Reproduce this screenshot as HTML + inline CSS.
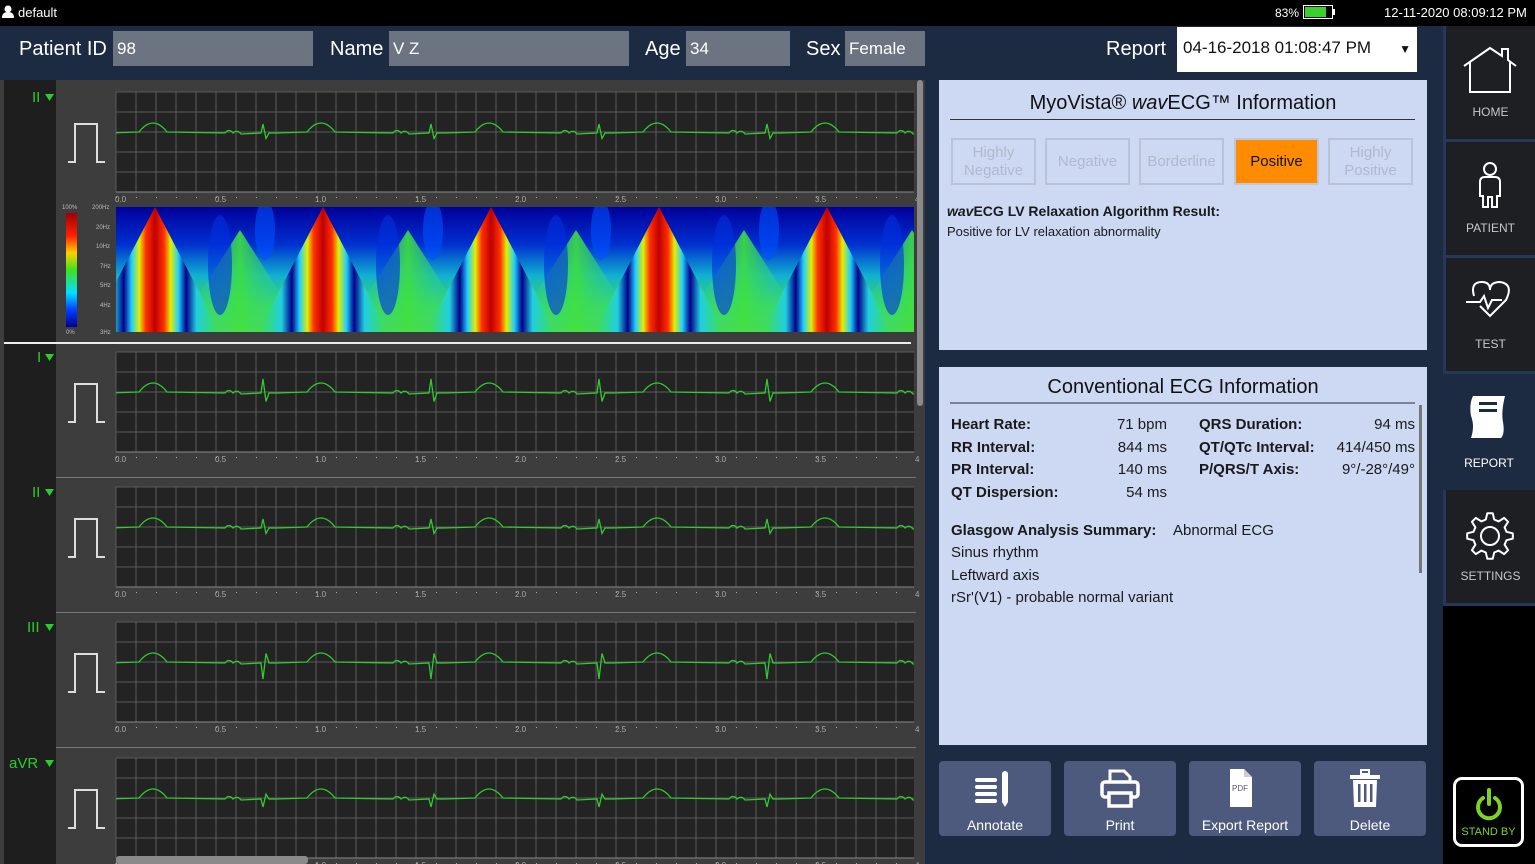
<!DOCTYPE html>
<html><head><meta charset="utf-8">
<style>
*{box-sizing:border-box;margin:0;padding:0}
body{width:1535px;height:864px;overflow:hidden;background:#1c2b42;font-family:"Liberation Sans",sans-serif;position:relative}
.abs{position:absolute}
#top{left:0;top:0;width:1535px;height:26px;background:#000;color:#fff;font-size:13px}
.hl{color:#fff;font-size:20px;top:38px}
.fld{top:31px;height:35px;background:#6b7480;color:#fff;font-size:17px;padding:8px 4px}
.box{background:#cdd8f3;}
.rb{top:138px;width:85px;height:47px;border:2px solid #b8c3d8;color:#b0bacc;font-size:15px;text-align:center;display:flex;align-items:center;justify-content:center;line-height:18px}
.t{font-size:15px;color:#1a1a1a}
.b{font-weight:bold}
.btn{top:761px;width:112px;height:75px;background:#4e5a7d;border-radius:4px;color:#fff;font-size:14px;text-align:center}
.btn span{position:absolute;left:0;right:0;top:56px}
.btn svg{position:absolute;left:36px;top:8px}
.nav{left:1443px;width:92px;background:#1e1f23;border-left:3px solid #25385a;border-bottom:3px solid #25385a;color:#c8c8c8;font-size:12px;text-align:center}
.nav span{position:absolute;left:0;right:0;bottom:20px}
.nav svg{position:absolute;left:16px;top:18px}
</style></head><body>
<div id="top" class="abs">
<svg class="abs" style="left:2px;top:5px" width="12" height="13"><circle cx="6" cy="4" r="3.5" fill="#fff"/><path d="M0 13 Q0 7 6 7 Q12 7 12 13Z" fill="#fff"/></svg>
<span class="abs" style="left:18px;top:5px">default</span>
<span class="abs" style="left:1275px;top:6px;font-size:12px">83%</span>
<div class="abs" style="left:1303px;top:5px;width:30px;height:14px;border:1px solid #fff;padding:1px"><div style="width:80%;height:100%;background:#3bd12c"></div></div>
<div class="abs" style="left:1333px;top:9px;width:2px;height:6px;background:#fff"></div>
<span class="abs" style="left:1384px;top:5px;font-size:13px">12-11-2020 08:09:12 PM</span>
</div>
<span class="abs hl" style="left:19px">Patient ID</span><div class="abs fld" style="left:113px;width:200px">98</div>
<span class="abs hl" style="left:330px">Name</span><div class="abs fld" style="left:389px;width:240px">V Z</div>
<span class="abs hl" style="left:645px">Age</span><div class="abs fld" style="left:686px;width:104px">34</div>
<span class="abs hl" style="left:806px">Sex</span><div class="abs fld" style="left:845px;width:80px">Female</div>
<span class="abs hl" style="left:1106px">Report</span>
<div class="abs" style="left:1177px;top:27px;width:240px;height:45px;background:#fff;font-size:17px;padding:11px 6px;color:#111">04-16-2018 01:08:47 PM<span style="position:absolute;right:6px;top:15px;font-size:12px">▼</span></div>

<svg id="ecg" class="abs" style="left:0;top:80px" width="925" height="784"></svg>

<div class="abs box" style="left:939px;top:80px;width:488px;height:270px">
<div class="abs" style="left:0;right:0;top:12px;text-align:center;font-size:20px;color:#111">MyoVista® <i>wav</i>ECG™ Information</div>
<div class="abs" style="left:11px;top:39px;width:465px;height:1px;background:#333"></div>
</div>
<div class="abs rb" style="left:951px">Highly<br>Negative</div>
<div class="abs rb" style="left:1045px">Negative</div>
<div class="abs rb" style="left:1139px">Borderline</div>
<div class="abs rb" style="left:1234px;background:#ff8c00;border-color:#c0c8d8;color:#111">Positive</div>
<div class="abs rb" style="left:1328px">Highly<br>Positive</div>
<div class="abs t b" style="left:947px;top:203px;font-size:14px"><i>wav</i>ECG LV Relaxation Algorithm Result:</div>
<div class="abs t" style="left:947px;top:224px;font-size:13px">Positive for LV relaxation abnormality</div>

<div class="abs box" style="left:939px;top:367px;width:488px;height:378px">
<div class="abs" style="left:0;right:0;top:9px;text-align:center;font-size:20px;color:#111">Conventional ECG Information</div>
<div class="abs" style="left:11px;top:35px;width:465px;height:2px;background:#7a8294"></div>
<div class="abs" style="left:480px;top:38px;width:3px;height:168px;background:#777"></div>
</div>
<div class="abs t b" style="left:951px;top:414px;line-height:22.5px">Heart Rate:<br>RR Interval:<br>PR Interval:<br>QT Dispersion:</div>
<div class="abs t" style="left:1067px;width:100px;text-align:right;top:414px;line-height:22.5px">71 bpm<br>844 ms<br>140 ms<br>54 ms</div>
<div class="abs t b" style="left:1199px;top:414px;line-height:22.5px">QRS Duration:<br>QT/QTc Interval:<br>P/QRS/T Axis:</div>
<div class="abs t" style="left:1315px;width:100px;text-align:right;top:414px;line-height:22.5px">94 ms<br>414/450 ms<br>9°/-28°/49°</div>
<div class="abs t" style="left:951px;top:520px;line-height:22.3px"><b>Glasgow Analysis Summary:</b>&nbsp;&nbsp;&nbsp;&nbsp;Abnormal ECG<br>Sinus rhythm<br>Leftward axis<br>rSr'(V1) - probable normal variant</div>

<div class="abs btn" style="left:939px"><svg width="40" height="40" viewBox="0 0 40 40"><g fill="#fff"><rect x="0" y="9" width="22" height="4" rx="2"/><rect x="0" y="16" width="22" height="4" rx="2"/><rect x="0" y="23" width="22" height="4" rx="2"/><rect x="0" y="30" width="22" height="4" rx="2"/><path d="M27 4 Q30 0 33 4 V33 L30 38 L27 33Z"/></g></svg><span>Annotate</span></div>
<div class="abs btn" style="left:1064px"><svg width="40" height="40" viewBox="0 0 40 40"><path d="M10 12 V2 H24 L30 8 V12" fill="none" stroke="#fff" stroke-width="3"/><rect x="2" y="13" width="36" height="15" rx="3" fill="none" stroke="#fff" stroke-width="3.5"/><rect x="9" y="24" width="22" height="13" fill="#4e5a7d" stroke="#fff" stroke-width="3.5"/></svg><span>Print</span></div>
<div class="abs btn" style="left:1189px"><svg width="40" height="40" viewBox="0 0 40 40"><path d="M5 0 H19 L27 8 V38 H5Z" fill="#fff"/><path d="M19 0 V8 H27" fill="#ccd" /><text x="7" y="22" font-size="8" fill="#4e5a7d" font-family="Liberation Sans">PDF</text></svg><span>Export Report</span></div>
<div class="abs btn" style="left:1314px"><svg width="40" height="40" viewBox="0 0 40 40"><rect x="0" y="6" width="30" height="4" fill="#fff"/><rect x="11" y="1" width="8" height="4" fill="none" stroke="#fff" stroke-width="2"/><path d="M3 11 H27 L26 38 H4Z" fill="#fff"/><g fill="#4e5a7d"><rect x="8" y="15" width="2.5" height="18"/><rect x="14" y="15" width="2.5" height="18"/><rect x="20" y="15" width="2.5" height="18"/></g></svg><span>Delete</span></div>

<div class="abs" style="left:1427px;top:26px;width:16px;height:838px;background:#1c2b42"></div>
<div class="abs nav" style="top:26px;height:116px"><svg width="56" height="50" viewBox="0 0 56 50"><path d="M2 22 L28 4 L40 12 V5 H46 V16 L54 22 M8 18 V48 H48 V18" fill="none" stroke="#fff" stroke-width="2"/></svg><span>HOME</span></div>
<div class="abs nav" style="top:142px;height:116px"><svg width="56" height="55" viewBox="0 0 56 55"><circle cx="28" cy="9" r="6" fill="none" stroke="#fff" stroke-width="2"/><path d="M21 47 V36 H18 V22 Q18 17 23 17 H33 Q38 17 38 22 V36 H35 V47 H30 V37 H26 V47Z" fill="none" stroke="#fff" stroke-width="2"/></svg><span>PATIENT</span></div>
<div class="abs nav" style="top:258px;height:116px"><svg width="56" height="50" viewBox="0 0 56 50"><path d="M4 26 H18 L22 20 L26 32 L30 24 H40 M12 20 Q8 6 20 6 Q28 6 28 14 Q28 6 38 6 Q52 8 44 24 L28 40 L18 30" fill="none" stroke="#fff" stroke-width="2"/></svg><span>TEST</span></div>
<div class="abs nav" style="top:374px;height:116px;background:#1c2b42;border:none"><svg width="56" height="52" viewBox="0 0 56 52"><path d="M14 4 H46 Q42 20 44 30 Q46 42 42 46 H12 Q16 34 12 24 Q10 12 14 4Z" fill="#fff"/><rect x="20" y="10" width="18" height="3" fill="#1c2b42"/><rect x="20" y="17" width="18" height="3" fill="#1c2b42"/></svg><span style="color:#fff">REPORT</span></div>
<div class="abs nav" style="top:490px;height:116px"><svg id="gear" width="56" height="56" viewBox="0 0 56 56"></svg><span>SETTINGS</span></div>
<div class="abs" style="left:1443px;top:606px;width:92px;height:258px;background:#000"></div>
<div class="abs" style="left:1453px;top:777px;width:71px;height:70px;border:3px solid #fff;border-radius:9px;background:#000;text-align:center">
<svg class="abs" style="left:18px;top:6px" width="30" height="36" viewBox="0 0 30 36"><path d="M9 12 A11 11 0 1 0 21 12" fill="none" stroke="#7ed321" stroke-width="4" stroke-linecap="round"/><path d="M15 4 V18" stroke="#7ed321" stroke-width="4" stroke-linecap="round"/></svg>
<span class="abs" style="left:0;right:0;top:46px;color:#7ed321;font-size:11px">STAND BY</span></div>

<script>
// gear
(function(){var p='',n=8,cx=28,cy=28;for(var i=0;i<n;i++){var a=i*2*Math.PI/n;var pts=[[-0.42,17],[-0.2,23],[0.2,23],[0.42,17]];var tw=2*Math.PI/n;pts.forEach(function(q,j){var ang=a+q[0]*tw*0.75;p+=(i==0&&j==0?'M':'L')+(cx+q[1]*Math.cos(ang)).toFixed(1)+' '+(cy+q[1]*Math.sin(ang)).toFixed(1)+' ';});}
p+='Z';document.getElementById('gear').innerHTML='<path d="'+p+'" fill="none" stroke="#fff" stroke-width="2" stroke-linejoin="round"/><circle cx="28" cy="28" r="9" fill="none" stroke="#fff" stroke-width="2"/>';})();
var s=document.getElementById('ecg'),h='';
h+='<rect width="925" height="784" fill="#3d3d3d"/><rect x="4" y="0" width="52" height="784" fill="#1e1e1e"/>';
h+='<defs><linearGradient id="cb" x1="0" y1="0" x2="0" y2="1"><stop offset="0" stop-color="#a00000"/><stop offset=".2" stop-color="#ff2000"/><stop offset=".35" stop-color="#ffd000"/><stop offset=".5" stop-color="#40e020"/><stop offset=".7" stop-color="#00e0ff"/><stop offset=".85" stop-color="#0040ff"/><stop offset="1" stop-color="#000090"/></linearGradient>'+
'<linearGradient id="sb" x1="0" y1="0" x2="0" y2="1"><stop offset="0" stop-color="#00009a"/><stop offset=".3" stop-color="#0030d0"/><stop offset=".55" stop-color="#10b0d0"/><stop offset=".8" stop-color="#40e050"/><stop offset="1" stop-color="#60e040"/></linearGradient>'+
'<linearGradient id="tr" x1="0" y1="0" x2="1" y2="0"><stop offset="0" stop-color="#40e040"/><stop offset=".18" stop-color="#20d0e0"/><stop offset=".26" stop-color="#00008a"/><stop offset=".32" stop-color="#20d0ff"/><stop offset=".38" stop-color="#e0f000"/><stop offset=".43" stop-color="#ff3000"/><stop offset=".5" stop-color="#c00000"/><stop offset=".57" stop-color="#ff3000"/><stop offset=".62" stop-color="#e0f000"/><stop offset=".68" stop-color="#20d0ff"/><stop offset=".74" stop-color="#00008a"/><stop offset=".82" stop-color="#20d0e0"/><stop offset="1" stop-color="#40e040"/></linearGradient>'+
'<linearGradient id="gr" x1="0" y1="0" x2="1" y2="0"><stop offset="0" stop-color="#20c0d0" stop-opacity="0"/><stop offset=".5" stop-color="#40e040"/><stop offset="1" stop-color="#20c0d0" stop-opacity="0"/></linearGradient>'+
'<clipPath id="sp"><rect x="116" y="127" width="798" height="125"/></clipPath></defs>';
function strip(y0,lbl,spike){
  h+='<rect x="116" y="'+(y0+12)+'" width="798" height="100" fill="#232323"/>';
  for(var x=116;x<=914;x+=20)h+='<line x1="'+x+'" y1="'+(y0+12)+'" x2="'+x+'" y2="'+(y0+112)+'" stroke="#5a5a5a" stroke-width="1"/>';
  for(var y=y0+12;y<=y0+112;y+=20)h+='<line x1="116" y1="'+y+'" x2="914" y2="'+y+'" stroke="#5a5a5a" stroke-width="1"/>';
  h+='<line x1="116" y1="'+(y0+112)+'" x2="914" y2="'+(y0+112)+'" stroke="#888"/>';
  for(var i=0;i<=8;i++){var xx=116+i*100;h+='<text x="'+(xx-1)+'" y="'+(y0+122)+'" font-size="8" fill="#aaa" font-family="Liberation Sans">'+(i==8?'4':(i/2).toFixed(1))+'</text>';}
  for(var x=116;x<914;x+=20)h+='<rect x="'+x+'" y="'+(y0+117)+'" width="1" height="1" fill="#aaa"/>';
  var lx=lbl=='aVR'?9:(lbl=='III'?27:(lbl=='II'?32:37));
  h+='<text x="'+lx+'" y="'+(y0+22)+'" font-size="15" fill="#2ccc2c" font-family="Liberation Sans">'+lbl+'</text><path d="M45 '+(y0+14)+' h9 l-4.5 7z" fill="#2ccc2c"/>';
  var py=y0+42;h+='<path d="M68 '+(py+40)+' h7 v-38 h22 v38 h8" fill="none" stroke="#ddd" stroke-width="2"/>';
  var b=y0+52,d='M116 '+b;
  for(var k=-1;k<6;k++){var c=153+k*168;
    d+=' L'+(c-14)+' '+b+' Q'+c+' '+(b-18)+' '+(c+14)+' '+b+' L'+(c+72)+' '+(b+1)+' q4 -5 8 0 q4 -4 8 1';
    var q=c+108;d+=' L'+q+' '+(b+1)+' l2 '+(-spike)+' l3 '+(spike*1.6)+' l3 '+(-spike*0.6)+' L'+(q+16)+' '+(b+1);}
  d+=' L914 '+b;
  h+='<clipPath id="c'+y0+'"><rect x="116" y="'+(y0+12)+'" width="798" height="100"/></clipPath><path d="'+d+'" fill="none" stroke="#2ecc2e" stroke-width="1.3" clip-path="url(#c'+y0+')"/>';
}
strip(0,'II',9);
// spectrogram
h+='<g clip-path="url(#sp)"><rect x="116" y="127" width="798" height="125" fill="url(#sb)"/>';
for(var k=-1;k<6;k++){var c=155+k*168;
 h+='<polygon points="'+(c+20)+',252 '+(c+85)+',150 '+(c+150)+',252" fill="url(#gr)" opacity=".9"/>';
 h+='<ellipse cx="'+(c+65)+'" cy="185" rx="12" ry="50" fill="#0030e0" opacity=".6"/>';
 h+='<ellipse cx="'+(c+110)+'" cy="150" rx="10" ry="30" fill="#0050ff" opacity=".6"/>';
 h+='<polygon points="'+(c-65)+',252 '+c+',127 '+(c+65)+',252" fill="url(#tr)"/>';}
h+='</g><rect x="66" y="133" width="11" height="114" fill="url(#cb)"/>';
h+='<g font-size="6" fill="#bbb" font-family="Liberation Sans"><text x="62" y="129">100%</text><text x="66" y="254">0%</text><text x="92" y="129">200Hz</text><text x="96" y="149">20Hz</text><text x="96" y="168">10Hz</text><text x="100" y="188">7Hz</text><text x="100" y="207">5Hz</text><text x="100" y="227">4Hz</text><text x="100" y="254">3Hz</text></g>';
h+='<rect x="4" y="262" width="907" height="2" fill="#eee"/>';
strip(260,'I',14);
h+='<rect x="56" y="397" width="860" height="1" fill="#777"/>';
strip(395,'II',9);
h+='<rect x="56" y="532" width="860" height="1" fill="#777"/>';
strip(530,'III',-16);
h+='<rect x="56" y="667" width="860" height="1" fill="#777"/>';
strip(666,'aVR',-8);
h+='<rect x="917" y="0" width="6" height="326" rx="3" fill="#8a8a8a"/><rect x="116" y="776" width="192" height="8" rx="3" fill="#8a8a8a"/>';
s.innerHTML=h;
</script>
</body></html>
